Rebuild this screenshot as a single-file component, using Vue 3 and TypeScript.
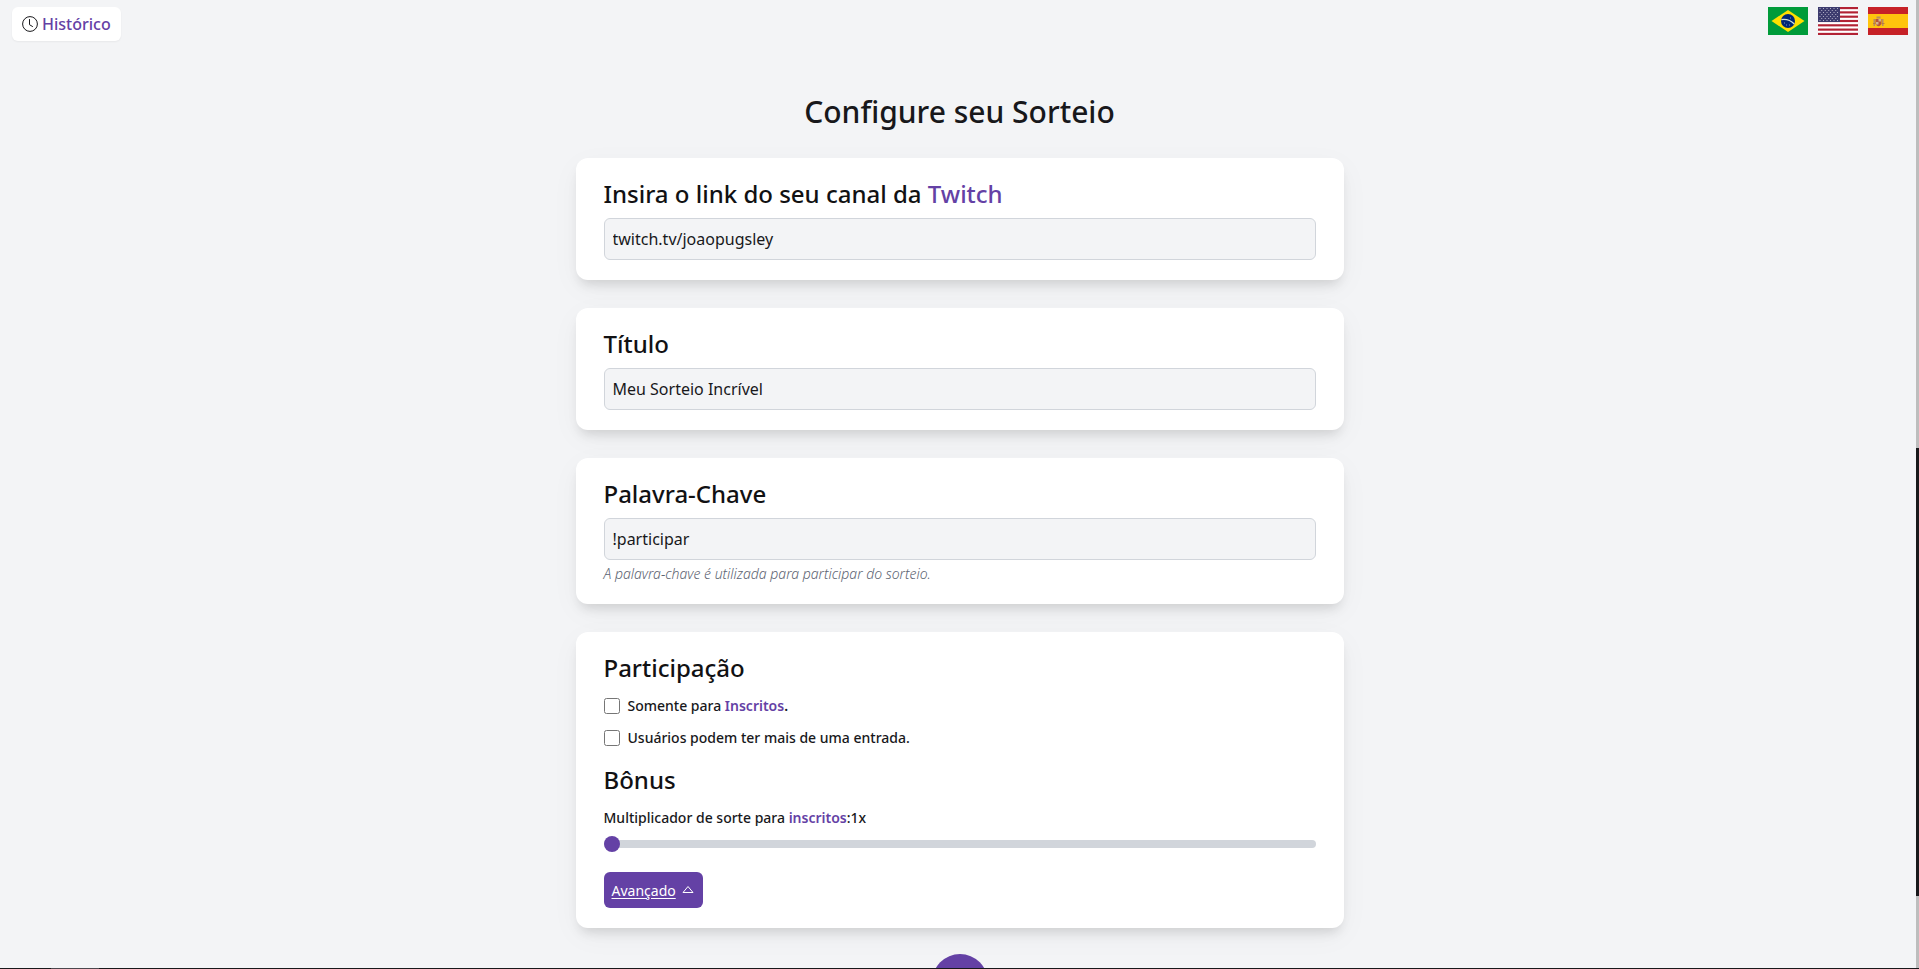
<script setup lang="ts">
import { ref } from 'vue'

const channel = ref('twitch.tv/joaopugsley')
const title = ref('Meu Sorteio Incrível')
const keyword = ref('!participar')
const subscribersOnly = ref(false)
const multipleEntries = ref(false)
const multiplier = ref(1)

const stripes = [0, 1, 2, 3, 4, 5, 6]
const stars: { x: number; y: number }[] = []
for (let row = 0; row < 7; row++) {
  for (let col = 0; col < (row % 2 ? 5 : 6); col++) {
    stars.push({ x: 2 + col * 3.5 + (row % 2 ? 1.75 : 0), y: 1.5 + row * 2 })
  }
}
</script>

<template>
  <div class="page">
    <header class="topbar">
      <button type="button" class="history">
        <svg width="16" height="16" viewBox="0 0 16 16" fill="none" stroke="#18181b" aria-hidden="true">
          <circle cx="8" cy="8" r="7.4" />
          <path d="M7.5 3.5v5.2l3 1.8" stroke-linecap="round" />
        </svg>
        <span>Histórico</span>
      </button>
      <nav class="languages" aria-label="Idiomas">
        <button type="button" class="flag" aria-label="Português">
          <svg width="40" height="28" viewBox="0 0 40 28" aria-hidden="true">
            <path fill="#009b3a" d="M0 0h40v28H0z" />
            <path fill="#fedf00" d="M20 3l16.5 11L20 25 3.5 14z" />
            <circle cx="20" cy="14" r="7" fill="#002776" />
            <path d="M13.4 12.6c4.8-.7 9.5.9 12.9 4.4" fill="none" stroke="#cfe0dc" stroke-width="1.2" />
            <path d="M16 16h1M18 18h1M21 18h1M22 11h1" stroke="#7d93bd" />
          </svg>
        </button>
        <button type="button" class="flag" aria-label="English">
          <svg width="40" height="28" viewBox="0 0 40 28" aria-hidden="true">
            <path fill="#fff" d="M0 0h40v28H0z" />
            <rect v-for="i in stripes" :key="i" x="0" :y="i * 4.308" width="40" height="2.154" fill="#b22234" />
            <path fill="#3c3b6e" d="M0 0h22v15H0z" />
            <circle v-for="(s, i) in stars" :key="i" :cx="s.x" :cy="s.y" r=".55" fill="#c3c3d6" />
          </svg>
        </button>
        <button type="button" class="flag" aria-label="Español">
          <svg width="40" height="28" viewBox="0 0 40 28" aria-hidden="true">
            <path fill="#c62127" d="M0 0h40v28H0z" />
            <path fill="#ffc40d" d="M0 7h40v14H0z" />
            <path fill="#b88c63" d="M5.500 12h1.500v7H5.500zM14 12h1.500v7H14zM8.500 9.500h4v2h-4z" />
            <path fill="#b5533c" d="M7.500 12h6v5q-3 4.500-6 0z" />
            <path fill="#d3b48e" d="M10.500 12h2.500v2.500h-2.500zM8 15h2.500v2.500H8z" />
            <path d="M5 16.500h2.500M13.500 16.500h3" stroke="#b87a45" />
          </svg>
        </button>
      </nav>
    </header>

    <main class="content">
      <h1>Configure seu Sorteio</h1>
      <form class="form" @submit.prevent>
        <section class="card">
          <h2><label for="channel">Insira o link do seu canal da <span class="accent">Twitch</span></label></h2>
          <input id="channel" v-model="channel" class="field" type="text" />
        </section>

        <section class="card">
          <h2><label for="title">Título</label></h2>
          <input id="title" v-model="title" class="field" type="text" />
        </section>

        <section class="card">
          <h2><label for="keyword">Palavra-Chave</label></h2>
          <input id="keyword" v-model="keyword" class="field" type="text" />
          <p class="hint">A palavra-chave é utilizada para participar do sorteio.</p>
        </section>

        <section class="card">
          <h2>Participação</h2>
          <div class="options">
            <label class="option">
              <input v-model="subscribersOnly" type="checkbox" />
              <span>Somente para <b class="accent">Inscritos</b><b>.</b></span>
            </label>
            <label class="option">
              <input v-model="multipleEntries" type="checkbox" />
              <span>Usuários podem ter mais de uma entrada.</span>
            </label>
          </div>
          <h2>Bônus</h2>
          <label class="slider-label" for="multiplier">Multiplicador de sorte para <b class="accent">inscritos</b>:{{ multiplier }}x</label>
          <input id="multiplier" v-model.number="multiplier" class="slider" type="range" min="1" max="10" />
          <button type="button" class="advanced">
            <span>Avançado</span>
            <svg width="12" height="12" viewBox="0 0 12 12" fill="none" stroke="#fff" aria-hidden="true">
              <path d="M6 2.500L11 8.500H1z" stroke-linejoin="round" />
            </svg>
          </button>
        </section>

        <button type="submit" class="submit" aria-label="Iniciar sorteio"></button>
      </form>
    </main>

    <div class="scrollbar" aria-hidden="true"><div class="thumb"></div></div>
    <div class="edge" aria-hidden="true"><div class="edge-mark"></div></div>
  </div>
</template>

<style>
body {
  margin: 0;
  background: #f3f4f6;
}
</style>

<style scoped>
* {
  box-sizing: border-box;
}
.page {
  position: relative;
  height: 100vh;
  overflow: hidden;
  background: #f3f4f6;
  color: #18181b;
  font-family: "Noto Sans", "Open Sans", sans-serif;
}
button,
input {
  font-family: inherit;
  color: inherit;
}
button {
  border: 0;
  cursor: pointer;
}
.topbar {
  display: flex;
  justify-content: space-between;
  align-items: flex-start;
  padding: 7px 11px 0 12px;
}
.history {
  display: flex;
  align-items: center;
  gap: 4px;
  height: 34px;
  padding: 0 10px;
  border-radius: 6px;
  background: #fff;
  box-shadow: 0 1px 2px rgba(0, 0, 0, 0.05);
  color: #6441a5;
  font-size: 16px;
  font-weight: 500;
}
.languages {
  display: flex;
  gap: 10px;
}
.flag {
  padding: 0;
  background: none;
}
.flag svg {
  display: block;
}
.content {
  max-width: 768px;
  margin: 0 auto;
  padding-top: 53px;
}
h1 {
  margin: 0 0 28px;
  text-align: center;
  font-size: 30px;
  line-height: 36px;
  font-weight: 500;
}
.form {
  display: flex;
  flex-direction: column;
  gap: 28px;
}
.card {
  padding: 20px 28px;
  border-radius: 12px;
  background: #fff;
  box-shadow: 0 8px 30px rgba(0, 0, 0, 0.04), 0 8px 12px -4px rgba(0, 0, 0, 0.13);
}
h2 {
  margin: 0 0 8px;
  color: #111113;
  font-size: 24px;
  line-height: 32px;
  font-weight: 500;
}
.accent {
  color: #6441a5;
}
.field {
  display: block;
  width: 100%;
  height: 42px;
  padding: 0 8px;
  border: 1px solid #d1d5db;
  border-radius: 6px;
  background: #f3f4f6;
  font-size: 16px;
}
.hint {
  margin: 4px 0 0;
  color: #5d6472;
  font-size: 14px;
  line-height: 20px;
  font-style: italic;
  font-weight: 300;
}
b {
  font-weight: 600;
}
.options {
  display: flex;
  flex-direction: column;
  align-items: flex-start;
  gap: 4px;
  margin-bottom: 12px;
}
.option {
  display: flex;
  align-items: center;
  gap: 8px;
  font-size: 14px;
  line-height: 28px;
  font-weight: 500;
}
.option input {
  width: 16px;
  height: 16px;
  margin: 0;
}
.slider-label {
  display: block;
  font-size: 14px;
  line-height: 28px;
  font-weight: 500;
}
.slider {
  display: block;
  appearance: none;
  width: 100%;
  height: 8px;
  margin: 8px 0 24px;
  border-radius: 8px;
  background: #d1d5db;
}
.slider::-webkit-slider-thumb {
  appearance: none;
  width: 16px;
  height: 16px;
  border-radius: 50%;
  background: #6441a5;
}
.advanced {
  display: flex;
  align-items: center;
  gap: 6px;
  height: 36px;
  padding: 0 9px 0 8px;
  border-radius: 6px;
  background: #6441a5;
  color: #fff;
  font-size: 14px;
}
.advanced span {
  text-decoration: underline;
  text-underline-offset: 2px;
}
.submit {
  align-self: center;
  width: 56px;
  height: 56px;
  margin-top: -2px;
  border-radius: 50%;
  background: #6441a5;
}
.scrollbar {
  position: absolute;
  inset: 0 0 0 auto;
  width: 3px;
  background: #bdbdbd;
}
.thumb {
  height: 46.25%;
  margin-top: 448px;
  background: #18181b;
}
.edge {
  position: absolute;
  inset: auto 0 0 0;
  height: 1px;
  padding-left: 51px;
  background: #18181b;
}
.edge-mark {
  width: 48px;
  height: 1px;
  background: #4b474d;
}
</style>
